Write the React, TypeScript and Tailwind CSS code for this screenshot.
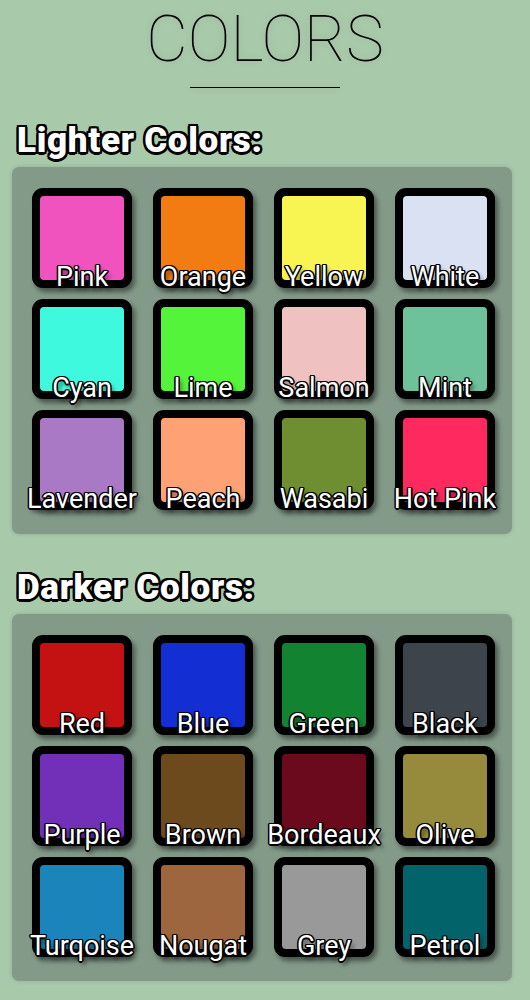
import React from "react";

type C = { name: string; color: string };

const lighter: C[] = [
  { name: "Pink", color: "#f052be" },
  { name: "Orange", color: "#f27b12" },
  { name: "Yellow", color: "#f8f552" },
  { name: "White", color: "#d9e1f2" },
  { name: "Cyan", color: "#3ff9de" },
  { name: "Lime", color: "#53f43a" },
  { name: "Salmon", color: "#efc1c0" },
  { name: "Mint", color: "#6dc19b" },
  { name: "Lavender", color: "#aa79c6" },
  { name: "Peach", color: "#fea174" },
  { name: "Wasabi", color: "#6f8e31" },
  { name: "Hot Pink", color: "#fe2a5f" },
];

const darker: C[] = [
  { name: "Red", color: "#c41212" },
  { name: "Blue", color: "#132ed3" },
  { name: "Green", color: "#128331" },
  { name: "Black", color: "#3e444c" },
  { name: "Purple", color: "#7230b8" },
  { name: "Brown", color: "#6c4a1e" },
  { name: "Bordeaux", color: "#6b0a1c" },
  { name: "Olive", color: "#968a3c" },
  { name: "Turqoise", color: "#1b85bb" },
  { name: "Nougat", color: "#9e663e" },
  { name: "Grey", color: "#999999" },
  { name: "Petrol", color: "#02636b" },
];

function Tile({ c }: { c: C }) {
  return (
    <div className="relative w-[100px] h-[100px]">
      <div className="w-full h-full rounded-[11px] bg-black p-[8px] shadow-[3px_4px_5px_rgba(0,0,0,0.45)]">
        <div className="w-full h-full rounded-[4px]" style={{ backgroundColor: c.color }} />
      </div>
      <div className="absolute left-1/2 -translate-x-1/2 bottom-[-3px] whitespace-nowrap text-[27px] leading-none text-white font-['Roboto',sans-serif] [text-shadow:1.5px_0_0_#000,-1.5px_0_0_#000,0_1.5px_0_#000,0_-1.5px_0_#000,1px_1px_0_#000,-1px_-1px_0_#000,1px_-1px_0_#000,-1px_1px_0_#000,3px_4px_4px_rgba(0,0,0,0.55)]">
        {c.name}
      </div>
    </div>
  );
}

function Section({ title, items }: { title: string; items: C[] }) {
  return (
    <div className="flex flex-col">
      <div className="pl-[17px] text-[35px] leading-none font-black tracking-[0.7px] text-white font-['Roboto',sans-serif] [text-shadow:2.5px_0_0_#000,-2.5px_0_0_#000,0_2.5px_0_#000,0_-2.5px_0_#000,2px_2px_0_#000,-2px_-2px_0_#000,2px_-2px_0_#000,-2px_2px_0_#000]">
        {title}
      </div>
      <div className="mt-[9px] mx-[12px] w-[500px] rounded-[7px] bg-[#839a89] pl-[20px] pt-[21px] pb-[24px] shadow-[0_0_4px_rgba(0,0,0,0.15)]">
        <div className="grid grid-cols-[repeat(4,100px)] gap-x-[21px] gap-y-[11px]">
          {items.map((c) => (
            <Tile key={c.name} c={c} />
          ))}
        </div>
      </div>
    </div>
  );
}

export default function App() {
  return (
    <div className="w-[530px] min-h-[1000px] bg-[#a9c9ab] font-['Roboto',sans-serif] overflow-hidden">
      <div className="flex flex-col items-center">
        <div className="mt-[8px] text-[64px] leading-none font-thin text-black [text-shadow:0_0_8px_rgba(0,0,0,0.12)]">
          COLORS
        </div>
        <div className="mt-[15px] w-[150px] h-px bg-black shadow-[0_2px_6px_rgba(0,0,0,0.15)]" />
      </div>
      <div className="mt-[35px]">
        <Section title="Lighter Colors:" items={lighter} />
      </div>
      <div className="mt-[36px]">
        <Section title="Darker Colors:" items={darker} />
      </div>
    </div>
  );
}
